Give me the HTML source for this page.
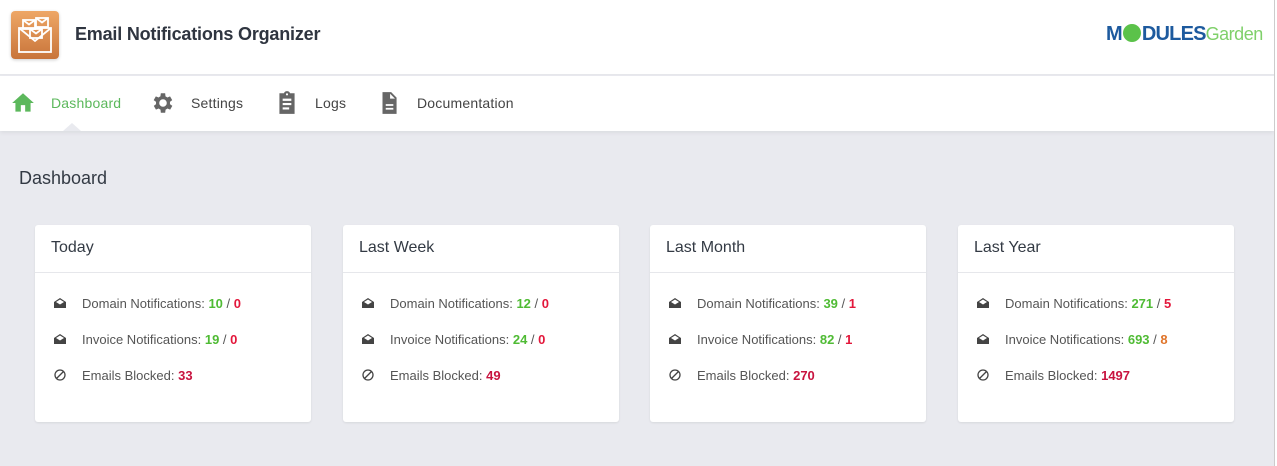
<!DOCTYPE html>
<html><head><meta charset="utf-8"><style>
*{box-sizing:border-box;margin:0;padding:0}
body{width:1277px;height:466px;overflow:hidden;background:#e9eaef;font-family:"Liberation Sans",Arial,sans-serif;position:relative}
.top{position:absolute;left:0;top:0;width:1274px;height:75px;background:#fff;border-bottom:1px solid #e6e7eb}
.logo{position:absolute;left:11px;top:11px;width:48px;height:48px;border-radius:4px;background:linear-gradient(180deg,#eea766,#c8743a);box-shadow:0 1px 3px rgba(0,0,0,.2)}
.title{position:absolute;left:75px;top:24px;font-size:18px;color:#2f3540;font-weight:bold;letter-spacing:-0.2px}
.nav{position:absolute;left:0;top:76px;width:1274px;height:55px;background:#fff;box-shadow:0 2px 4px rgba(0,0,0,.06)}
.ni{position:absolute;top:19px;font-size:14px;color:#444;letter-spacing:0.2px}
.ni svg{position:absolute;left:-41px;top:-5px}
.caret{position:absolute;left:63px;top:47px;width:0;height:0;border-left:9px solid transparent;border-right:9px solid transparent;border-bottom:8px solid #e9eaef}
.sb{position:absolute;right:0;top:0;width:3px;height:466px;background:#fff;border-left:1px solid #ccc}
h1{position:absolute;left:19px;top:168px;font-size:18px;font-weight:normal;color:#333a44}
.card{position:absolute;top:225px;width:276px;height:197px;background:#fff;border-radius:3px;box-shadow:0 1px 2px rgba(0,0,0,.08)}
.ch{height:48px;border-bottom:1px solid #e6e7eb;padding:14px 0 0 16px;font-size:16px;color:#333a44}
.row{position:absolute;left:47px;font-size:13px;color:#555}
.row svg{position:absolute;left:-28px;top:1px}
.g{color:#4fbb34;font-weight:bold}.r{color:#e3173b;font-weight:bold}.m{color:#c8133f;font-weight:bold}.o{color:#e0752b;font-weight:bold}
</style></head><body>
<div class="top">
<div class="logo"><svg width="48" height="48" viewBox="0 0 48 48" fill="none" stroke="#fff" stroke-width="1.8"><rect x="8" y="17" width="32" height="24"/><path d="M8 17l16 13 16-13"/><rect x="12" y="9" width="12" height="9"/><path d="M12 9l6 4.5 6-4.5"/><rect x="25" y="7" width="12" height="9"/><path d="M25 7l6 4.5 6-4.5"/><rect x="19" y="18" width="12" height="9"/><path d="M19 18l6 4.5 6-4.5"/></svg></div>
<div class="title">Email Notifications Organizer</div>
<div style="position:absolute;left:1106px;top:23px;font-size:20px;font-weight:bold;color:#1d5a9e;letter-spacing:-0.8px">M<span style="display:inline-block;width:18px;height:18px;border-radius:50%;background:#5bc24a;vertical-align:-2px;margin:0 1px"></span>DULES<span style="font-weight:normal;color:#7fd06a;font-size:18px;letter-spacing:-0.5px">Garden</span></div>
</div>
<div class="nav">
<div class="ni" style="left:51px;color:#5cb85c"><svg width="26" height="26" viewBox="0 0 24 24"><path fill="#5cb85c" d="M10 20v-6h4v6h5v-8h3L12 3 2 12h3v8z"/></svg>Dashboard</div>
<div class="ni" style="left:191px"><svg width="26" height="26" viewBox="0 0 24 24"><path fill="#666" d="M19.4 13a7.5 7.5 0 000-2l2.1-1.6-2-3.5-2.5 1a7 7 0 00-1.7-1L15 3h-4l-.4 2.9a7 7 0 00-1.7 1l-2.5-1-2 3.5L6.6 11a7.5 7.5 0 000 2l-2.1 1.6 2 3.5 2.5-1a7 7 0 001.7 1L11 21h4l.4-2.9a7 7 0 001.7-1l2.5 1 2-3.5zM13 15.5A3.5 3.5 0 1113 8.5a3.5 3.5 0 010 7z" transform="translate(-1 0)"/></svg>Settings</div>
<div class="ni" style="left:315px"><svg width="26" height="26" viewBox="0 0 24 24"><path fill="#666" d="M19 3h-4.2A3 3 0 009.2 3H5v19h14zM12 3a1 1 0 110 2 1 1 0 010-2zM8 8h8v2H8zm0 4h8v2H8zm0 4h6v2H8z"/></svg>Logs</div>
<div class="ni" style="left:417px"><svg width="26" height="26" viewBox="0 0 24 24"><path fill="#666" d="M14 2H6v20h13V7zm-1 1.5L17.5 8H13zM9 13h7v1.6H9zm0 3.5h7v1.6H9z"/></svg>Documentation</div>
<div class="caret"></div>
</div>
<h1>Dashboard</h1>
<div class="card" style="left:35px"><div class="ch">Today</div>
<div class="row" style="top:71px"><svg width="12" height="12" viewBox="0 0 12 12"><path fill="#444" d="M0 5L6 1l6 4v6H0z"/><path fill="#fff" d="M2 5l4 2.5L10 5 6 2.5z"/></svg>Domain Notifications: <span class="g">10</span> / <span class="r">0</span></div>
<div class="row" style="top:107px"><svg width="12" height="12" viewBox="0 0 12 12"><path fill="#444" d="M0 5L6 1l6 4v6H0z"/><path fill="#fff" d="M2 5l4 2.5L10 5 6 2.5z"/></svg>Invoice Notifications: <span class="g">19</span> / <span class="r">0</span></div>
<div class="row" style="top:143px"><svg width="12" height="12" viewBox="0 0 12 12"><circle cx="6" cy="6" r="5" fill="none" stroke="#444" stroke-width="1.3"/><path d="M2.5 9.5l7-7" stroke="#444" stroke-width="1.3"/></svg>Emails Blocked: <span class="m">33</span></div></div>
<div class="card" style="left:343px"><div class="ch">Last Week</div>
<div class="row" style="top:71px"><svg width="12" height="12" viewBox="0 0 12 12"><path fill="#444" d="M0 5L6 1l6 4v6H0z"/><path fill="#fff" d="M2 5l4 2.5L10 5 6 2.5z"/></svg>Domain Notifications: <span class="g">12</span> / <span class="r">0</span></div>
<div class="row" style="top:107px"><svg width="12" height="12" viewBox="0 0 12 12"><path fill="#444" d="M0 5L6 1l6 4v6H0z"/><path fill="#fff" d="M2 5l4 2.5L10 5 6 2.5z"/></svg>Invoice Notifications: <span class="g">24</span> / <span class="r">0</span></div>
<div class="row" style="top:143px"><svg width="12" height="12" viewBox="0 0 12 12"><circle cx="6" cy="6" r="5" fill="none" stroke="#444" stroke-width="1.3"/><path d="M2.5 9.5l7-7" stroke="#444" stroke-width="1.3"/></svg>Emails Blocked: <span class="m">49</span></div></div>
<div class="card" style="left:650px"><div class="ch">Last Month</div>
<div class="row" style="top:71px"><svg width="12" height="12" viewBox="0 0 12 12"><path fill="#444" d="M0 5L6 1l6 4v6H0z"/><path fill="#fff" d="M2 5l4 2.5L10 5 6 2.5z"/></svg>Domain Notifications: <span class="g">39</span> / <span class="r">1</span></div>
<div class="row" style="top:107px"><svg width="12" height="12" viewBox="0 0 12 12"><path fill="#444" d="M0 5L6 1l6 4v6H0z"/><path fill="#fff" d="M2 5l4 2.5L10 5 6 2.5z"/></svg>Invoice Notifications: <span class="g">82</span> / <span class="r">1</span></div>
<div class="row" style="top:143px"><svg width="12" height="12" viewBox="0 0 12 12"><circle cx="6" cy="6" r="5" fill="none" stroke="#444" stroke-width="1.3"/><path d="M2.5 9.5l7-7" stroke="#444" stroke-width="1.3"/></svg>Emails Blocked: <span class="m">270</span></div></div>
<div class="card" style="left:958px"><div class="ch">Last Year</div>
<div class="row" style="top:71px"><svg width="12" height="12" viewBox="0 0 12 12"><path fill="#444" d="M0 5L6 1l6 4v6H0z"/><path fill="#fff" d="M2 5l4 2.5L10 5 6 2.5z"/></svg>Domain Notifications: <span class="g">271</span> / <span class="r">5</span></div>
<div class="row" style="top:107px"><svg width="12" height="12" viewBox="0 0 12 12"><path fill="#444" d="M0 5L6 1l6 4v6H0z"/><path fill="#fff" d="M2 5l4 2.5L10 5 6 2.5z"/></svg>Invoice Notifications: <span class="g">693</span> / <span class="o">8</span></div>
<div class="row" style="top:143px"><svg width="12" height="12" viewBox="0 0 12 12"><circle cx="6" cy="6" r="5" fill="none" stroke="#444" stroke-width="1.3"/><path d="M2.5 9.5l7-7" stroke="#444" stroke-width="1.3"/></svg>Emails Blocked: <span class="m">1497</span></div></div>
<div class="sb"></div>
</body></html>
